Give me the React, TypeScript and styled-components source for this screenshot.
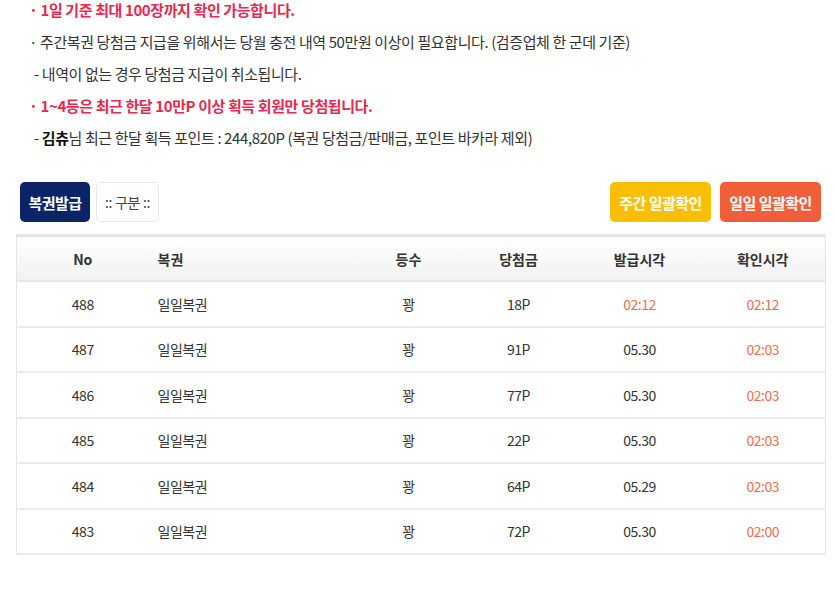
import { FunctionComponent } from 'react';
import styled, { createGlobalStyle } from 'styled-components';

const GlobalStyle = createGlobalStyle`
  html, body {
    margin: 0;
    padding: 0;
    background: #fff;
  }
  body {
    font-family: "Noto Sans CJK KR", "Noto Sans", sans-serif;
    color: #333;
  }
`;

interface Ticket {
  no: number;
  name: string;
  rank: string;
  prize: string;
  issued: string;
  issuedToday: boolean;
  checked: string;
}

const tickets: Ticket[] = [
  { no: 488, name: '일일복권', rank: '꽝', prize: '18P', issued: '02:12', issuedToday: true, checked: '02:12' },
  { no: 487, name: '일일복권', rank: '꽝', prize: '91P', issued: '05.30', issuedToday: false, checked: '02:03' },
  { no: 486, name: '일일복권', rank: '꽝', prize: '77P', issued: '05.30', issuedToday: false, checked: '02:03' },
  { no: 485, name: '일일복권', rank: '꽝', prize: '22P', issued: '05.30', issuedToday: false, checked: '02:03' },
  { no: 484, name: '일일복권', rank: '꽝', prize: '64P', issued: '05.29', issuedToday: false, checked: '02:03' },
  { no: 483, name: '일일복권', rank: '꽝', prize: '72P', issued: '05.30', issuedToday: false, checked: '02:00' },
];

const App: FunctionComponent = () => {
  return (
    <Page>
      <GlobalStyle />
      {/* notices */}
      <Notices>
        <Notice $accent>· 1일 기준 최대 100장까지 확인 가능합니다.</Notice>
        <Notice>· 주간복권 당첨금 지급을 위해서는 당월 충전 내역 50만원 이상이 필요합니다. (검증업체 한 군데 기준)</Notice>
        <Notice $sub>- 내역이 없는 경우 당첨금 지급이 취소됩니다.</Notice>
        <Notice $accent>· 1~4등은 최근 한달 10만P 이상 획득 회원만 당첨됩니다.</Notice>
        <Notice $sub>
          - <b>김츄</b>님 최근 한달 획득 포인트 : 244,820P (복권 당첨금/판매금, 포인트 바카라 제외)
        </Notice>
      </Notices>

      {/* toolbar */}
      <Toolbar>
        <ButtonGroup $gap={6}>
          <ActionButton $bg="#0b2468" $width={70}>복권발급</ActionButton>
          <FilterButton>:: 구분 ::</FilterButton>
        </ButtonGroup>
        <ButtonGroup $gap={9}>
          <ActionButton $bg="#fbbe07" $width={101}>주간 일괄확인</ActionButton>
          <ActionButton $bg="#f05e3a" $width={101}>일일 일괄확인</ActionButton>
        </ButtonGroup>
      </Toolbar>

      {/* list */}
      <Table>
        <colgroup>
          <col style={{ width: 132 }} />
          <col style={{ width: 210 }} />
          <col style={{ width: 100 }} />
          <col style={{ width: 120 }} />
          <col style={{ width: 122 }} />
          <col />
        </colgroup>
        <thead>
          <tr>
            <Th>No</Th>
            <Th $left>복권</Th>
            <Th>등수</Th>
            <Th>당첨금</Th>
            <Th>발급시각</Th>
            <Th>확인시각</Th>
          </tr>
        </thead>
        <tbody>
          {tickets.map((t) => (
            <Row key={t.no}>
              <Td>{t.no}</Td>
              <Td $left>{t.name}</Td>
              <Td>{t.rank}</Td>
              <Td>{t.prize}</Td>
              <Td $time={t.issuedToday}>{t.issued}</Td>
              <Td $time>{t.checked}</Td>
            </Row>
          ))}
        </tbody>
      </Table>
    </Page>
  );
};

const Page = styled.div`
  width: 835px;
  height: 597px;
  overflow: hidden;
`;

const Notices = styled.ul`
  list-style: none;
  margin: -6px 0 0;
  padding: 0 0 0 29px;
`;

const Notice = styled.li<{ $accent?: boolean; $sub?: boolean }>`
  line-height: 32px;
  height: 32px;
  font-size: 15px;
  letter-spacing: -0.4px;
  white-space: nowrap;
  color: ${(p) => (p.$accent ? '#e8294f' : '#333')};
  font-weight: ${(p) => (p.$accent ? 700 : 400)};
  padding-left: ${(p) => (p.$sub ? '5px' : '0')};

  b {
    font-weight: 700;
    color: #111;
  }
`;

const Toolbar = styled.div`
  display: flex;
  justify-content: space-between;
  align-items: center;
  margin-top: 28px;
  padding: 0 14px 0 20px;
`;

const ButtonGroup = styled.div<{ $gap: number }>`
  display: flex;
  gap: ${(p) => p.$gap}px;
`;

const ActionButton = styled.button<{ $bg: string; $width: number }>`
  width: ${(p) => p.$width}px;
  height: 40px;
  padding: 0;
  border: none;
  border-radius: 5px;
  background: ${(p) => p.$bg};
  color: #fff;
  font-family: inherit;
  font-size: 15px;
  font-weight: 700;
  letter-spacing: -0.5px;
  white-space: nowrap;
`;

const FilterButton = styled.button`
  height: 40px;
  width: 63px;
  padding: 0;
  border: 1px solid #e6e6e6;
  border-radius: 5px;
  background: #fff;
  color: #444;
  font-family: inherit;
  font-size: 14px;
  letter-spacing: -0.3px;
`;

const Table = styled.table`
  margin: 12px 9px 0 16px;
  width: 810px;
  border-collapse: collapse;
  table-layout: fixed;
  border: 1px solid #e4e4e4;
  border-top: 3px solid #e4e4e4;
`;

const Th = styled.th<{ $left?: boolean }>`
  height: 43px;
  padding: 0 0 0 ${(p) => (p.$left ? '9px' : '0')};
  text-align: ${(p) => (p.$left ? 'left' : 'center')};
  font-size: 14px;
  font-weight: 700;
  color: #333;
  background: linear-gradient(#ffffff, #f1f1f1);
  border-bottom: 2px solid #e8e8e8;
`;

const Row = styled.tr`
  height: 45.5px;
  border-bottom: 2px solid #ebebeb;
`;

const Td = styled.td<{ $left?: boolean; $time?: boolean }>`
  padding: 0 0 0 ${(p) => (p.$left ? '9px' : '0')};
  text-align: ${(p) => (p.$left ? 'left' : 'center')};
  font-size: 14px;
  letter-spacing: -0.5px;
  color: ${(p) => (p.$time ? '#f36b52' : '#333')};
`;

export default App;
